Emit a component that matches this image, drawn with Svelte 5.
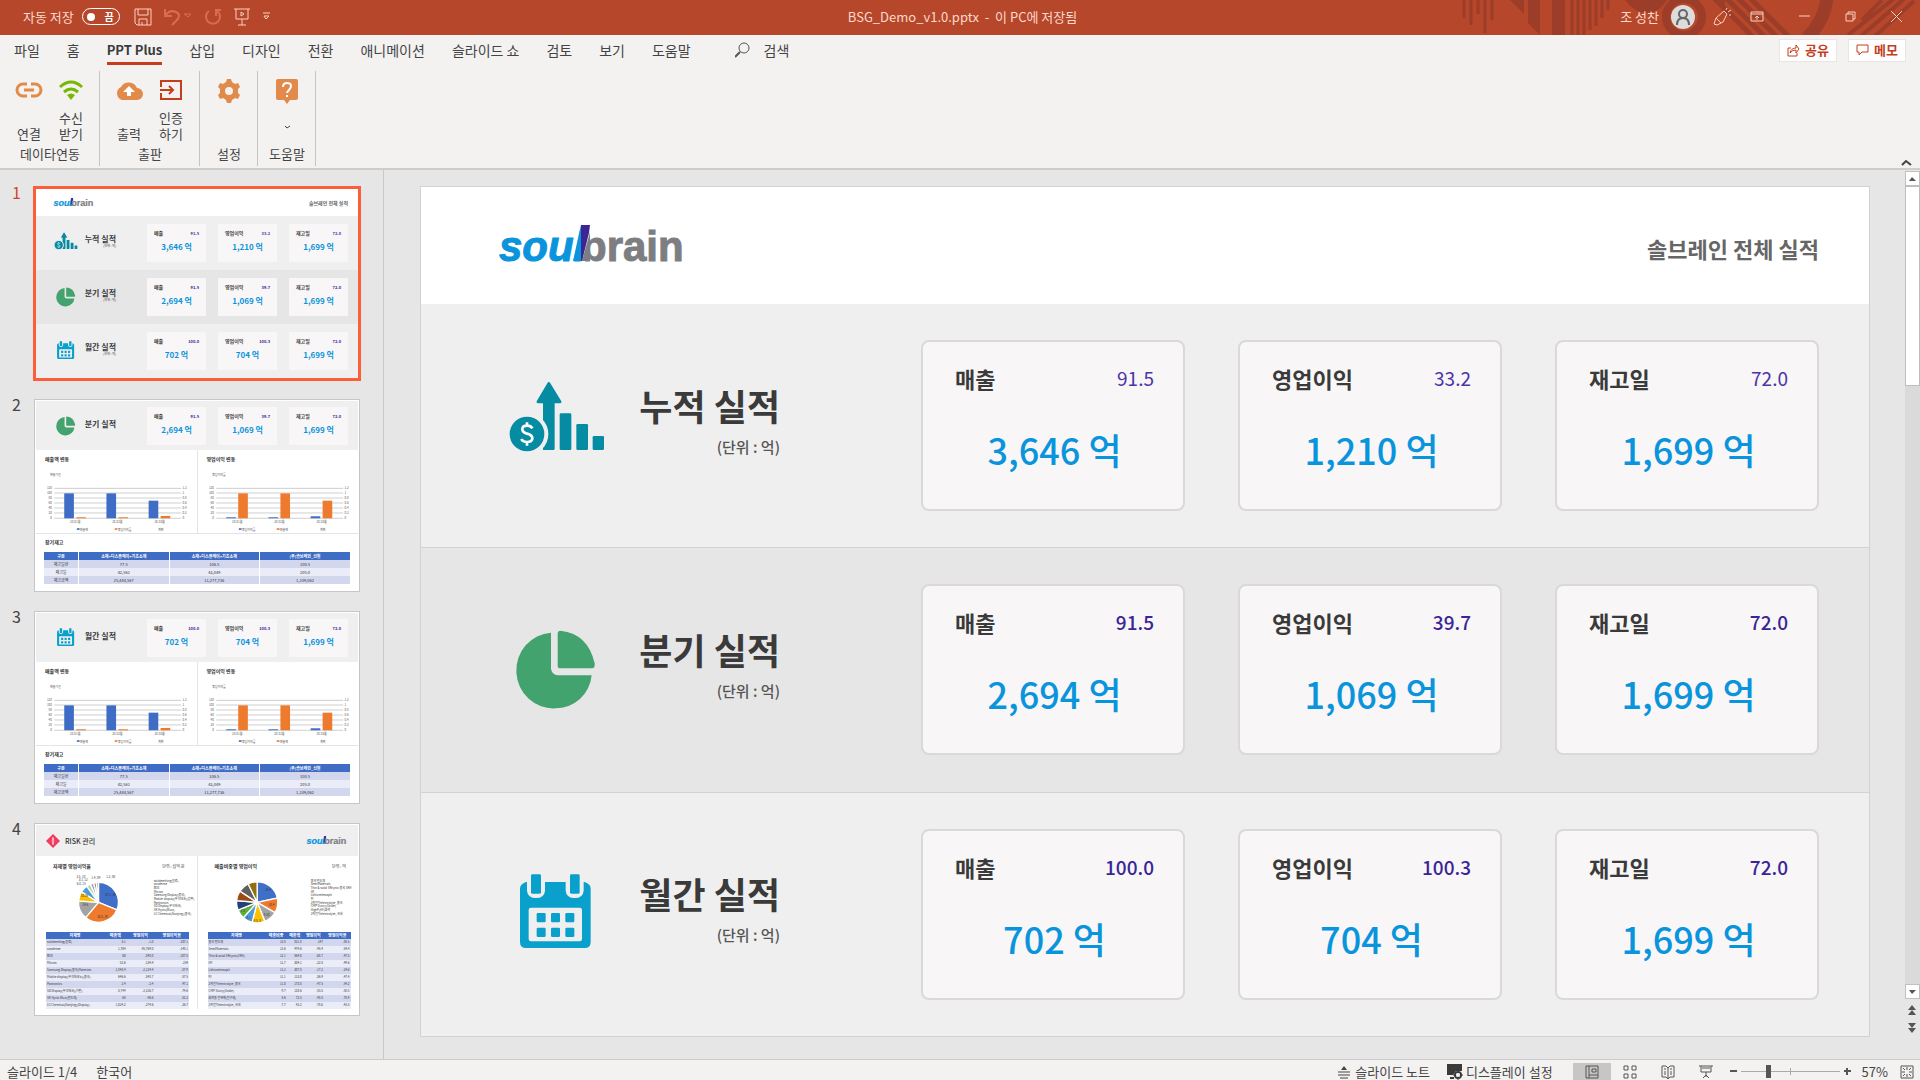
<script>
  const tabs = ['파일', '홈', 'PPT Plus', '삽입', '디자인', '전환', '애니메이션', '슬라이드 쇼', '검토', '보기', '도움말'];

  const rows = [
    { icon: 'growth', title: '누적 실적', cards: [['매출', '91.5', '3,646 억'], ['영업이익', '33.2', '1,210 억'], ['재고일', '72.0', '1,699 억']] },
    { icon: 'pie', title: '분기 실적', strong: true, cards: [['매출', '91.5', '2,694 억'], ['영업이익', '39.7', '1,069 억'], ['재고일', '72.0', '1,699 억']] },
    { icon: 'calendar', title: '월간 실적', strong: true, cards: [['매출', '100.0', '702 억'], ['영업이익', '100.3', '704 억'], ['재고일', '72.0', '1,699 억']] }
  ];

  const grid = [291, 305, 320, 335, 350, 365, 381];
  const leftTicks = ['120', '100', '80', '60', '40', '20', '0'];
  const rightTicks = ['1.2', '1', '0.8', '0.6', '0.4', '0.2', '0'];
  const charts = [
    { title: '매출액 변동', sub: '매출기준', blue: [75, 75, 53], orange: [3, 3, 7], legend: ['매출액', '영업이익률'] },
    { title: '영업이익 변동', sub: '영업이익률', blue: [3, 3, 6], orange: [75, 75, 53], legend: ['영업이익률', '매출액'] }
  ];

  const stockHead = ['구분', '소재+디스플레이+기초소재', '소재+디스플레이+기초소재', '(주)솔브레인_신월'];
  const stock = [
    ['재고일반', '77.5', '106.5', '100.5'],
    ['재고일', '42,561', '43,049', '205.0'],
    ['재고금액', '25,444,567', '11,277,736', '1,109,062']
  ];

  const riskLeft = {
    title: '자재별 영업이익율', unit: '단위 : 십억 원', cx: 296, r: 60, legendX: 462,
    slices: [['#3f6fc8', 112], ['#ee7a2e', 108], ['#a3a3a3', 54], ['#fcc000', 28], ['#4f9bd8', 22], ['#b9d4a0', 12], ['#8ea6cf', 10], ['#c08a55', 8], ['#8a8a8a', 6]],
    labels: [[332, 274, '27.1, 30'], [308, 339, '23.5, 29'], [256, 302, '14.6'], [254, 275, '10.26'], [244, 239, '6.0, 15'], [250, 228, '3.1, 12'], [243, 219, '2.5, 10'], [288, 222, '1.4, 09'], [333, 219, '1.2, 08']],
    legend: ['solidmelting(원료)', 'condense', 'BOE', 'Micron', 'Samsung Display(중국)', 'Mobile display(무석테크)(광주)', 'Pantronics', 'SD Display(무석테크)', 'SK Hynix(Wuxi)', 'LG Chemical(Nanjing)(중국)'],
    head: ['자재명', '매출액', '영업이익', '영업이익율'],
    body: [['solidmelting(원료)', '3.1', '-1.0', '-107.1'], ['condense', '1,764', '-45,769.0', '-148.1'], ['BOE', '60', '-348.0', '-107.5'], ['Micron', '52.6', '-134.4', '-254'], ['Samsung Display(중국)Materials', '1,848.4', '-2,124.4', '-87.9'], ['Mobile display(무석테크노)(중국)', '646.6', '-348.7', '-57.5'], ['Pantronics', '2.4', '-2.4', '-47.1'], ['SD Display(무석테크)(기판)', '3,744', '-2,226.7', '-74.6'], ['SK Hynix Wuxi(반도체)', '68', '-46.6', '-52.2'], ['LG Chemical(Nanjing)(Display)', '1,024.2', '-274.6', '-26.7']]
  };
  const riskRight = {
    title: '매출비중별 영업이익', unit: '단위 : 억', cx: 771, r: 62, legendX: 932,
    slices: [['#3f6fc8', 78], ['#ee7a2e', 42], ['#a3a3a3', 38], ['#fcc000', 36], ['#4f9bd8', 28], ['#5fae3c', 26], ['#21407e', 27], ['#9c4a16', 28], ['#5f5f5f', 31], ['#8f6f10', 26]],
    labels: [[804, 257, '12.4'], [814, 303, '10.4'], [800, 334, '9.28'], [771, 351, '9.5, 8'], [745, 343, '8.1'], [728, 322, '7.8']],
    legend: ['중국 반도체', 'SemiMaterials', 'Thin & solid SKhynix 중국 SKH', 'HF', 'Lithiumhexaplt', 'PI', '2차전지electrolyte_중국', 'CMP Slurry(Oxide)', 'HighP(HF)화학', '2차전지electrolyte_국내'],
    head: ['자재명', '매출비중', '매출액', '영업이익', '영업이익율'],
    body: [['중국 반도체', '12.8', '821.8', '-147', '-88.5'], ['SemiMaterials', '12.6', '474.6', '-48.4', '-54.4'], ['Thin & solid SKhynix(SKH)', '12.1', '564.0', '-68.7', '-47.5'], ['HF', '11.7', '304.1', '-22.5', '-49.6'], ['Lithiumhexaplt', '11.2', '307.8', '-17.2', '-24.6'], ['PI', '11.1', '113.0', '-36.9', '-47.4'], ['2차전지electrolyte_중국', '11.0', '173.8', '-47.5', '-54.2'], ['CMP Slurry(Oxide)', '9.7', '133.6', '-55.5', '-58.5'], ['화학용 전해액(전구체)', '8.6', '72.5', '-48.5', '-78.4'], ['2차전지electrolyte_국내', '7.7', '42.2', '-78.6', '-42.5']]
  };

  function pieSlices(p) {
    let a = 0;
    const pt = (d) => [p.cx + p.r * Math.sin((d * Math.PI) / 180), 292 - p.r * Math.cos((d * Math.PI) / 180)].map((n) => n.toFixed(1)).join(' ');
    return p.slices.map(([fill, deg]) => {
      const d = `M${p.cx} 292L${pt(a)}A${p.r} ${p.r} 0 0 1 ${pt(a + deg)}Z`;
      a += deg;
      return { fill, d };
    });
  }

  let autosave = $state(false);
  let zoom = $state(27);
</script>

{#snippet logo()}
  <svg class="logo" viewBox="0 -8 190 60" role="img" aria-label="soulbrain">
    <g font-family="'Liberation Sans', Arial, sans-serif" font-weight="700" font-size="42" stroke-width="1">
      <text x="0" y="37" font-style="italic" fill="#0a94dc" stroke="#0a94dc">soul</text>
      <text x="82" y="37" fill="#7d7e82" stroke="#7d7e82">brain</text>
    </g>
    <path fill="#fff" d="M84 0h8v13l-6 25h-2z" />
    <path fill="#0a94dc" d="M74 37 82 1h4l-3 36z" />
    <path fill="#7d7e82" d="M91 8v29h-8z" />
    <path fill="#3c2595" d="M82 1h9l-1 8-7 28h-1z" />
  </svg>
{/snippet}

{#snippet metricIcon(kind)}
  {#if kind === 'growth'}
    <svg class="micon" viewBox="328 600 288 273" aria-hidden="true">
      <g fill="#058ca3">
        <path d="M447 606q3 0 5 4l33 54q2 6-4 6h-16v136q0 4-4 4h-31V670h-15q-6 0-4-6l32-54q2-4 4-4z" />
        <rect x="480" y="700" width="35" height="110" rx="4" /><rect x="530" y="732" width="35" height="78" rx="4" /><rect x="579" y="768" width="34" height="42" rx="4" />
        <circle cx="382" cy="762" r="58" stroke="#efefef" stroke-width="12" />
      </g>
      <path d="M398 745q-4-8-16-8-14 0-14 11 0 9 14 13 16 4 16 14 0 11-16 11-13 0-17-9M382 727v10M382 786v11" fill="none" stroke="#fff" stroke-width="8" />
    </svg>
  {:else if kind === 'pie'}
    <svg class="micon" viewBox="84 75 288 273" aria-hidden="true">
      <g fill="#43a36e">
        <path d="M210 101v108q2 18 21 20h101a109 109 0 0 1-109 99A109 112 0 0 1 210 101z" />
        <path d="M230 104q0-9 9-9 82 9 102 98 2 15-8 15h-97q-6 0-6-6z" />
      </g>
    </svg>
  {:else}
    <svg class="micon" viewBox="87 803 288 273" aria-hidden="true">
      <path fill="#09a0cc" d="M138 842h3v26q2 22 27 22t27-22v-26h62v26q2 22 27 22t27-22v-26h3q18 6 18 20v160q0 18-18 18H138q-18 0-18-18V862q0-14 18-20z" />
      <rect x="146" y="919" width="160" height="101" rx="7" fill="#efefef" />
      <g fill="#09a0cc">
        <rect x="153" y="819" width="30" height="58" rx="4" /><rect x="270" y="819" width="29" height="58" rx="4" />
        {#each [170, 213, 256] as x}
          <rect {x} y="935" width="27" height="28" rx="4" /><rect {x} y="979" width="27" height="28" rx="4" />
        {/each}
      </g>
    </svg>
  {/if}
{/snippet}

{#snippet metricRow(row, unit)}
  <section class="row" class:strong={row.strong}>
    {@render metricIcon(row.icon)}
    <div class="rowname">
      <h2>{row.title}</h2>
      {#if unit}<p>(단위 : 억)</p>{/if}
    </div>
    <div class="cards">
      {#each row.cards as [label, rate, value]}
        <article class="card">
          <div class="cardtop"><h3>{label}</h3><span>{rate}</span></div>
          <strong>{value}</strong>
        </article>
      {/each}
    </div>
  </section>
{/snippet}

{#snippet summary()}
  <header class="slidehead">{@render logo()}<h1>솔브레인 전체 실적</h1></header>
  {#each rows as row}{@render metricRow(row, true)}{/each}
{/snippet}

{#snippet detail(row)}
  {@render metricRow(row, false)}
  <div class="panels">
    {#each charts as c}
      <div class="panel">
        <h4>{c.title}</h4>
        <svg viewBox="108 230 483 195" aria-label={c.title} role="img">
          <g font-size="9" fill="#555">
            <text x="150" y="253">{c.sub}</text>
            {#each grid as y, i}
              <path d="M163 {y}H545" stroke="#cfcfcf" stroke-width="3" />
              <text x="156" y={y + 3} text-anchor="end">{leftTicks[i]}</text>
              <text x="549" y={y + 3}>{rightTicks[i]}</text>
            {/each}
            {#each [193, 320, 447] as x, i}
              <rect {x} y={381 - c.blue[i]} width="29" height={c.blue[i]} fill="#3f6cc4" />
              <rect x={x + 36} y={381 - c.orange[i]} width="29" height={c.orange[i]} fill="#ee7a2e" />
              <text x={x + 33} y="394" text-anchor="middle">20-0{i + 1}월</text>
            {/each}
            <rect x="231" y="411" width="8" height="5" fill="#3f6cc4" /><text x="240" y="418">{c.legend[0]}</text>
            <rect x="345" y="411" width="8" height="5" fill="#ee7a2e" /><text x="354" y="418">{c.legend[1]}</text>
            <text x="475" y="418">계획</text>
          </g>
        </svg>
      </div>
    {/each}
  </div>
  <div class="stock">
    <h4>장기재고</h4>
    <table>
      <thead><tr>{#each stockHead as h}<th>{h}</th>{/each}</tr></thead>
      <tbody>{#each stock as r}<tr>{#each r as v}<td>{v}</td>{/each}</tr>{/each}</tbody>
    </table>
  </div>
{/snippet}

{#snippet risk()}
  <header class="riskhead">
    <svg viewBox="0 0 42 42" aria-hidden="true"><path fill="#f23a5c" d="M21 0 42 21 21 42 0 21z" /><path d="M21 10q5 11 0 22-5-11 0-22z" fill="none" stroke="#fff" stroke-width="2" /></svg>
    <h4>RISK 관리</h4>
    {@render logo()}
  </header>
  <div class="panels">
    {#each [riskLeft, riskRight] as p, k}
      <div class="panel riskpanel">
        <div class="risktitle"><h4>{p.title}</h4><span>{p.unit}</span></div>
        <svg viewBox="{k ? 593 : 108} 210 483 171" role="img" aria-label={p.title}>
          {#each pieSlices(p) as s}<path d={s.d} fill={s.fill} stroke="#fff" stroke-width="4" />{/each}
          <g font-size="9" fill="#333">
            {#each p.labels as [x, y, t]}<text {x} {y} text-anchor="middle">{t}</text>{/each}
            {#each p.legend as t, i}<text x={p.legendX} y={230 + i * 11}>{t}</text>{/each}
          </g>
        </svg>
        <table class="risktable">
          <thead><tr>{#each p.head as h}<th>{h}</th>{/each}</tr></thead>
          <tbody>{#each p.body as r}<tr>{#each r as v}<td>{v}</td>{/each}</tr>{/each}</tbody>
        </table>
      </div>
    {/each}
  </div>
{/snippet}

<div class="app">
  <header class="titlebar">
    <svg class="decor" viewBox="0 0 460 35" aria-hidden="true">
      <g stroke="#9b3d28" fill="none">
        <path stroke-width="3" d="M4 0v18M11 0v25M18 0v14M25 0v33M32 0v20" />
        <path stroke-width="3" d="M112 0v35M118 0v35M124 0v35M130 0v30M136 0v26M142 0v18M148 0v10" />
        <circle cx="224" cy="17" r="18" stroke-width="8" />
        <path stroke-width="5" d="M254-2l38 38M266-2l38 38M278-2l38 38M290-2l38 38" />
        <path stroke-width="13" d="M367-2q-2 22-20 40" />
        <path stroke-width="4" d="M402 20 422 0M388 35l48-38M400 37l44-38M414 37l40-36" />
      </g>
      <g fill="#9b3d28"><path d="M50 0h14v14zM68 0h12v35l-12-12zM92 0h13v35H92zM165 0h42q-8 13-20 13T165 0zM253 0h12v12z" /></g>
    </svg>
    <div class="quick">
      <label class="auto">자동 저장
        <input type="checkbox" role="switch" bind:checked={autosave} />
        <span class="toggle"><i></i>끔</span>
      </label>
      <button aria-label="저장"><svg width="18" height="18" viewBox="0 0 18 18"><path d="M1 1h16v16H3l-2-2zM4 1v6h10V1M5 17v-6h8v6M8 17v-3" /></svg></button>
      <button class="dim" aria-label="실행 취소"><svg width="28" height="18" viewBox="0 0 28 18"><path d="M1 1v7h7M1 8Q6 1 12 4t0 9l-4 4" stroke-width="2" /><path d="M20 6h7l-3 3z" /></svg></button>
      <button class="dim" aria-label="다시 실행"><svg width="18" height="18" viewBox="0 0 18 18"><path d="M5 3a7 7 0 1 0 8 0M12 8V2h5" stroke-width="2" /></svg></button>
      <button aria-label="슬라이드 쇼 시작"><svg width="16" height="18" viewBox="0 0 16 18"><path d="M0 1h16M2 1v10h12V1M8 11v6M4 17h8M7 4v4l3-2z" /></svg></button>
      <button aria-label="사용자 지정"><svg width="9" height="9" viewBox="0 0 9 9"><path d="M1 1h7M2 4h5L4 7z" /></svg></button>
    </div>
    <div class="doc">BSG_Demo_v1.0.pptx&nbsp; -&nbsp; 이 PC에 저장됨</div>
    <div class="winctl">
      <span>조 성찬</span>
      <button class="avatar" aria-label="계정"><svg width="16" height="18" viewBox="0 0 16 18"><circle cx="8" cy="6" r="4" /><path d="M2 17q0-7 6-7t6 7" /></svg></button>
      <button aria-label="펜"><svg width="18" height="18" viewBox="0 0 18 18"><path d="M1 16 3 10 11 3l3 3-4 8-6 3zM3 10l5 5M13 2l1-2M15 4l3-2M16 7h2" /></svg></button>
      <button aria-label="리본 표시 옵션"><svg width="14" height="11" viewBox="0 0 14 11"><path d="M1 1h12v9H1zM1 3h12M7 9V5M5 7l2-2 2 2" /></svg></button>
      <button aria-label="최소화"><svg width="11" height="11" viewBox="0 0 11 11"><path d="M0 5h11" /></svg></button>
      <button aria-label="이전 크기로"><svg width="11" height="11" viewBox="0 0 11 11"><path d="M1 3h7v7H1zM3 3V1h7v7H8" /></svg></button>
      <button aria-label="닫기"><svg width="11" height="11" viewBox="0 0 11 11"><path d="M0 0l11 11M11 0 0 11" /></svg></button>
    </div>
  </header>

  <div class="ribbon">
    <nav class="tabs">
      {#each tabs as t}<button class:active={t === 'PPT Plus'}>{t}</button>{/each}
      <button class="search"><svg width="15" height="16" viewBox="0 0 15 16"><circle cx="9" cy="6" r="5" /><path d="M5 10 0 15" stroke-width="2" /></svg>검색</button>
      <div class="share">
        <button><svg width="13" height="13" viewBox="0 0 13 13"><path d="M4 4H1v8h9V9M3 9q1-5 6-5V1l3 4-3 4V6q-4 0-6 3z" /></svg>공유</button>
        <button><svg width="13" height="12" viewBox="0 0 13 12"><path d="M1 1h11v7H6l-3 3V8H1z" /></svg>메모</button>
      </div>
    </nav>
    <div class="groups">
      <div class="group">
        <div class="cmds">
          <button><svg width="28" height="22" viewBox="0 0 28 22"><g fill="none" stroke="#e18a4a" stroke-width="3"><path d="M12 5H8a6 6 0 0 0 0 12h4M16 5h4a6 6 0 0 1 0 12h-4M9 11h10" /></g></svg><span>연결</span></button>
          <button><svg width="26" height="22" viewBox="0 0 26 22"><g fill="none" stroke="#76b900" stroke-width="3"><path d="M2 8q11-10 22 0M6 13q7-6 14 0" /></g><path fill="#76b900" d="M9 16q4-3 8 0l-4 5z" /></svg><span>수신<br />받기</span></button>
        </div>
        <p>데이타연동</p>
      </div>
      <div class="group">
        <div class="cmds">
          <button><svg width="28" height="22" viewBox="0 0 28 22"><path fill="#e18a4a" d="M7 21a7 7 0 0 1-1-13A9 9 0 0 1 22 9a6 6 0 0 1 0 12z" /><path fill="#fff" d="M14 7l6 6h-4v4h-4v-4H8z" /></svg><span>출력</span></button>
          <button><svg width="24" height="22" viewBox="0 0 24 22"><path fill="none" stroke="#c43e1c" stroke-width="2" d="M2 8V2h20v18H2v-6M1 11h13M10 7l4 4-4 4" /></svg><span>인증<br />하기</span></button>
        </div>
        <p>출판</p>
      </div>
      <div class="group">
        <div class="cmds">
          <button aria-label="설정"><svg width="24" height="24" viewBox="0 0 24 24"><path fill="#e18a4a" fill-rule="evenodd" d="M10 0h4l1 3 3 2 3-1 2 4-2 2v4l2 2-2 4-3-1-3 2-1 3h-4l-1-3-3-2-3 1-2-4 2-2v-4L1 8l2-4 3 1 3-2zM12 8a4 4 0 1 0 0 8 4 4 0 0 0 0-8z" /></svg></button>
        </div>
        <p>설정</p>
      </div>
      <div class="group">
        <div class="cmds">
          <button aria-label="도움말"><svg width="22" height="25" viewBox="0 0 22 25"><path fill="#e18a4a" d="M2 0h18q2 0 2 2v17q0 2-2 2h-6l-3 4-3-4H2q-2 0-2-2V2q0-2 2-2z" /><path fill="none" stroke="#fff" stroke-width="2" d="M7 8q0-4 4-4t4 3q0 2-2 4t-2 3M11 16v2" /></svg><svg class="chev" width="7" height="5" viewBox="0 0 7 5"><path d="M1 1l2 2 3-2" fill="none" stroke="#444" /></svg></button>
        </div>
        <p>도움말</p>
      </div>
      <button class="collapse" aria-label="리본 축소"><svg width="11" height="7" viewBox="0 0 11 7"><path d="M1 6l4-4 5 4" fill="none" stroke="#444" stroke-width="2" /></svg></button>
    </div>
  </div>

  <main>
    <ol class="pane">
      <li class="current"><span>1</span><div class="thumb">{@render summary()}</div></li>
      <li><span>2</span><div class="thumb">{@render detail(rows[1])}</div></li>
      <li><span>3</span><div class="thumb">{@render detail(rows[2])}</div></li>
      <li><span>4</span><div class="thumb">{@render risk()}</div></li>
    </ol>
    <div class="editor"><div class="slide">{@render summary()}</div></div>
    <div class="scroll">
      <button class="box" aria-label="위로"><svg width="7" height="4" viewBox="0 0 7 4"><path d="M0 4l3-4 4 4z" /></svg></button>
      <div class="track"><div class="grip"></div></div>
      <button class="box" aria-label="아래로"><svg width="7" height="4" viewBox="0 0 7 4"><path d="M0 0l3 4 4-4z" /></svg></button>
      <button aria-label="이전 슬라이드"><svg width="8" height="10" viewBox="0 0 8 10"><path d="M0 5l4-5 4 5zM0 10l4-5 4 5z" /></svg></button>
      <button aria-label="다음 슬라이드"><svg width="8" height="10" viewBox="0 0 8 10"><path d="M0 0l4 5 4-5zM0 5l4 5 4-5z" /></svg></button>
    </div>
  </main>

  <footer class="status">
    <span>슬라이드 1/4</span><span>한국어</span>
    <div class="right">
      <button class="txt"><svg width="12" height="14" viewBox="0 0 12 14"><path d="M0 7h12M0 10h12M2 13h8" stroke="#444" /><path d="M3 5l3-4 3 4z" fill="#444" /></svg>슬라이드 노트</button>
      <button class="txt disp"><svg width="16" height="16" viewBox="0 0 16 16"><path d="M0 0h15v7H9l-3 4H0zM3 13h4v2H3z" fill="#3a3a3a" /><circle cx="11" cy="11" r="3" fill="none" stroke="#3a3a3a" stroke-width="2" /><path d="M11 6v10M6 11h10" stroke="#3a3a3a" /><circle cx="11" cy="11" r="2" fill="#f3f2f1" /></svg>디스플레이 설정</button>
      <button class="view on" aria-label="기본"><svg width="14" height="14" viewBox="0 0 14 14"><path d="M1 1h12v12H1zM4 1v12M4 10h9M7 4h4v3H7z" /></svg></button>
      <button class="view" aria-label="여러 슬라이드"><svg width="14" height="14" viewBox="0 0 14 14"><path d="M1 1h4v4H1zM9 1h4v4H9zM1 9h4v4H1zM9 9h4v4H9z" /></svg></button>
      <button class="view" aria-label="읽기용 보기"><svg width="14" height="14" viewBox="0 0 14 14"><path d="M1 1h4l2 2 2-2h4v11H9l-2 2-2-2H1zM7 3v11M3 4h2M3 7h2M3 9h2M9 4h2M9 7h2M9 9h2" /></svg></button>
      <button class="view" aria-label="슬라이드 쇼"><svg width="14" height="14" viewBox="0 0 14 14"><path d="M0 1h14M2 1v6h10V1M7 7v5M4 13l3-3 3 3M3 3h8" /></svg></button>
      <button class="zb" aria-label="축소"><svg width="7" height="7" viewBox="0 0 7 7"><path d="M0 3h7" stroke-width="2" /></svg></button>
      <input type="range" min="0" max="100" bind:value={zoom} aria-label="확대/축소" />
      <button class="zb" aria-label="확대"><svg width="7" height="7" viewBox="0 0 7 7"><path d="M0 3h7M3 0v7" stroke-width="2" /></svg></button>
      <button class="pct">57%</button>
      <button class="zb" aria-label="창에 맞춤"><svg width="14" height="14" viewBox="0 0 14 14"><path d="M1 1h12v12H1zM7 2v3M7 9v3M2 7h3M9 7h3M3 3l2 2M11 3 9 5M3 11l2-2M11 11 9 9" /></svg></button>
    </div>
  </footer>
</div>

<style>
  :global(body) { margin: 0; }
  .app { display: flex; flex-direction: column; height: 100vh; overflow: hidden; background: #e6e6e6; color: #444; font-family: 'Noto Sans CJK KR', 'Noto Sans', sans-serif; font-size: 13px; line-height: 16px; }
  .app :is(h1, h2, h3, h4, p, ol) { margin: 0; padding: 0; }
  button { display: flex; align-items: center; justify-content: center; padding: 0; border: 0; background: none; color: inherit; font: inherit; }
  svg { flex: none; display: block; }

  .titlebar { position: relative; display: grid; grid-template-columns: 1fr auto 1fr; align-items: center; flex: none; height: 35px; padding: 0 18px 2px 23px; box-sizing: border-box; background: #b7472a; color: #fbd9cc; }
  .decor { position: absolute; right: 0; top: 0; width: 460px; height: 35px; }
  .quick, .winctl { position: relative; display: flex; align-items: center; }
  .quick { gap: 12px; }
  .quick svg, .winctl svg { fill: none; stroke: #fbd0c0; }
  .quick .dim svg { stroke: #dc6c4e; }
  .auto { display: flex; align-items: center; gap: 8px; margin-right: 2px; }
  .auto input { position: absolute; opacity: 0; }
  .toggle { display: flex; align-items: center; justify-content: space-between; width: 38px; height: 17px; padding: 0 5px 0 4px; box-sizing: border-box; border: 1px solid #fff; border-radius: 9px; font-size: 10px; font-weight: 700; color: #fff; line-height: 14px; }
  .toggle i { width: 8px; height: 8px; border-radius: 50%; background: #fff; }
  .doc { position: relative; white-space: nowrap; line-height: 32px; }
  .winctl { justify-content: flex-end; }
  .winctl button { margin-left: 35px; }
  .winctl .avatar { width: 24px; height: 24px; margin-left: 12px; border-radius: 50%; background: #dcdcdc; }
  .winctl .avatar svg { stroke: #666; stroke-width: 2; }
  .winctl .avatar + button { margin-left: 18px; }
  .winctl .avatar + button + button { margin-left: 19px; }

  .ribbon { flex: none; background: #f3f2f1; border-bottom: 2px solid #cfcdcc; }
  .tabs { display: flex; align-items: center; gap: 27px; height: 34px; padding: 0 14px 4px; box-sizing: border-box; font-size: 14px; }
  .tabs > button { height: 30px; border-block: 3px solid transparent; box-sizing: border-box; }
  .tabs > .active { border-bottom-color: #c43e1c; font-weight: 700; font-size: 13px; color: #3b3b3b; }
  .tabs > .search { gap: 14px; margin-left: 17px; }
  .tabs svg { fill: none; stroke: #555; }
  .share { display: flex; gap: 11px; margin-left: auto; font-size: 13px; font-weight: 700; color: #c43e1c; }
  .share button { gap: 5px; width: 58px; height: 23px; background: #fff; border: 1px solid #e8e6e4; box-sizing: border-box; }
  .share svg { stroke: #c43e1c; }
  .groups { display: flex; padding: 2px 0; }
  .group { display: flex; flex-direction: column; padding: 0 7px 0 8px; height: 95px; border-right: 1px solid #c6c4c2; }
  .cmds { display: flex; height: 71px; }
  .cmds button { flex-direction: column; justify-content: flex-start; width: 42px; padding-top: 8px; }
  .cmds span, .cmds .chev { margin-top: auto; }
  .cmds .chev { margin-bottom: 12px; }
  .group p { line-height: 24px; text-align: center; white-space: nowrap; }
  .collapse { margin-left: auto; margin-right: 8px; align-self: flex-end; }

  main { display: flex; flex: 1; min-height: 0; }
  .pane { display: flex; flex-direction: column; gap: 21px; flex: none; width: 384px; box-sizing: border-box; border-right: 1px solid #c9c9c9; list-style: none; }
  .app .pane { padding-top: 18px; }
  .pane li { display: flex; gap: 11px; padding-left: 12px; }
  .pane li > span { width: 12px; font-size: 16px; line-height: 8px; }
  .pane .current > span { color: #d24726; }
  .thumb { display: flex; flex-direction: column; width: 324px; height: 191px; box-sizing: border-box; background: #fff; border: 1px solid #fff; box-shadow: 0 0 0 1px #c6c6c6; color: #333; }
  .current .thumb { border-color: #fd5d38; box-shadow: 0 0 0 2px #fd5d38; }
  .editor { display: flex; flex: 1; min-width: 0; padding: 17px 35px 23px 37px; }
  .slide { display: flex; flex-direction: column; flex: 1; min-width: 0; background: #fff; box-shadow: 0 0 0 1px #d2d2d2; }

  .slidehead { display: flex; align-items: center; justify-content: space-between; flex: none; height: 117px; padding: 0 50px 0 78px; }
  .slidehead h1 { font-size: 22px; line-height: 28px; font-weight: 700; color: #666; }
  .slide .slidehead h1 { padding-top: 5px; }
  .logo { width: 190px; height: 60px; }
  .row { display: flex; align-items: center; flex: 1; padding: 0 50px 0 88px; background: #efefef; }
  .row:nth-of-type(even) { background: #e6e6e6; }
  .slide .row { flex: 1 0 243px; }
  .slide .row + .row { border-top: 1px solid #d2d2d2; }
  .micon { width: 96px; height: 91px; }
  .rowname { width: 175px; margin-right: 141px; padding-bottom: 14px; text-align: right; white-space: nowrap; }
  .rowname h2 { font-size: 36px; line-height: 48px; font-weight: 700; color: #3a3a3a; }
  .app .slide .rowname p { margin-top: 8px; }
  .rowname p { font-size: 15px; line-height: 20px; font-weight: 500; color: #555; }
  .cards { display: grid; grid-template-columns: repeat(3, 1fr); gap: 53px; flex: 1; }
  .card { height: 171px; padding: 21px 29px 0 32px; box-sizing: border-box; border: 2px solid #dad8d8; border-radius: 8px; background: #f8f6f7; text-align: center; }
  .cardtop { display: flex; justify-content: space-between; align-items: center; }
  .card h3 { font-size: 22px; line-height: 30px; font-weight: 700; color: #3a3a3a; }
  .card span { font-size: 19px; line-height: 30px; color: #4a35a5; }
  .strong .card span { font-weight: 500; color: #3a2596; }
  .card strong { display: block; margin-top: 32px; font-size: 36px; line-height: 48px; font-weight: 500; color: #0a94dc; white-space: nowrap; }

  .thumb .slidehead { height: 27px; padding: 0 10px 0 17px; }
  .thumb .slidehead h1 { font-size: 5px; line-height: 8px; }
  .thumb .logo { width: 42px; height: 13px; }
  .thumb .row { padding: 0 10px 0 18px; }
  .thumb .micon { width: 24px; height: 22px; }
  .thumb .rowname { width: 38px; margin-right: 31px; padding-bottom: 4px; }
  .thumb .rowname h2 { font-size: 8px; line-height: 11px; }
  .thumb .rowname p { font-size: 3px; line-height: 5px; }
  .thumb .cards { gap: 12px; }
  .thumb .card { height: 38px; padding: 5px 7px; border: 0; border-radius: 1px; }
  .thumb .card h3 { font-size: 5px; line-height: 8px; }
  .thumb .card span { font-size: 4px; line-height: 8px; font-weight: 700; }
  .thumb .card strong { margin-top: 4px; font-size: 8px; line-height: 12px; font-weight: 700; }
  .panels { display: flex; }
  .panel { flex: 1; min-width: 0; }
  .panel + .panel { border-left: 1px solid #e4e4e4; }
  .panel > svg { width: 100%; height: 65px; }
  .panel > h4, .stock h4 { padding-left: 9px; font-size: 5px; line-height: 18px; }
  .panel h4 { font-weight: 700; }
  .stock { border-top: 1px solid #e4e4e4; padding: 0 8px 6px; }
  .app .stock h4 { margin-bottom: 2px; padding-left: 1px; line-height: 16px; }
  table { width: 100%; border-collapse: collapse; table-layout: fixed; font-size: 4px; line-height: 8px; text-align: center; }
  th, td { padding: 0; overflow: hidden; white-space: nowrap; }
  th { background: #3f6cc4; color: #fff; }
  th:first-child { width: 34px; }
  .stock :is(th, td) + :is(th, td) { border-left: 1px solid #ffffff66; }
  tbody tr { background: #eaecf7; }
  tbody tr:nth-child(odd) { background: #d2d7ed; }

  .riskhead { display: flex; align-items: center; height: 31px; padding: 0 10px; background: #efefef; }
  .riskhead > svg:first-child { width: 14px; height: 14px; }
  .app .riskhead h4 { margin: 0 auto 0 5px; font-size: 7px; line-height: 10px; font-weight: 500; }
  .riskpanel > svg { height: 57px; }
  .risktitle { display: flex; justify-content: space-between; padding: 2px 12px 1px 17px; font-size: 4px; line-height: 16px; }
  .risktitle h4 { font-size: 5px; }
  .app .risktable { width: auto; min-width: 143px; margin: 0 8px 0 10px; font-size: 3px; line-height: 7px; table-layout: auto; text-align: right; }
  .risktable th:first-child { width: 58px; }
  .risktable th { text-align: center; font-size: 4px; }
  .risktable td { padding: 0 1px; }
  .risktable td:first-child { text-align: left; }

  .scroll { display: flex; flex-direction: column; align-items: center; flex: none; width: 16px; padding: 1px 0 22px; }
  .scroll svg { fill: #555; }
  .scroll button { width: 16px; height: 18px; }
  .scroll .box { width: 15px; height: 15px; background: #fff; border: 1px solid #c0c0c0; box-sizing: border-box; }
  .scroll .box + button { margin-top: 2px; }
  .track { flex: 1; width: 15px; background: #dadada; }
  .grip { height: 25%; background: #fff; border: 1px solid #bdbdbd; box-sizing: border-box; }

  .status { display: flex; align-items: center; gap: 19px; flex: none; height: 21px; padding: 3px 6px 0 7px; box-sizing: border-box; border-top: 1px solid #cbcbcb; background: #f3f2f1; white-space: nowrap; }
  .status .right { display: flex; align-items: center; margin-left: auto; }
  .txt { gap: 5px; }
  .disp { margin: 0 20px 0 17px; gap: 3px; }
  .view { width: 38px; height: 18px; }
  .view.on { background: #c8c6c4; }
  .view svg, .zb svg { fill: none; stroke: #555; }
  input[type='range'] { appearance: none; width: 99px; height: 15px; margin: 0 4px; background: linear-gradient(#aaa, #aaa) center / 100% 1px no-repeat, linear-gradient(#aaa, #aaa) center / 1px 7px no-repeat; }
  input[type='range']::-webkit-slider-thumb { appearance: none; width: 5px; height: 13px; background: #555; }
  .zb:nth-of-type(7) { margin-left: 5px; }
  .pct { margin: 0 12px 0 11px; }
</style>
